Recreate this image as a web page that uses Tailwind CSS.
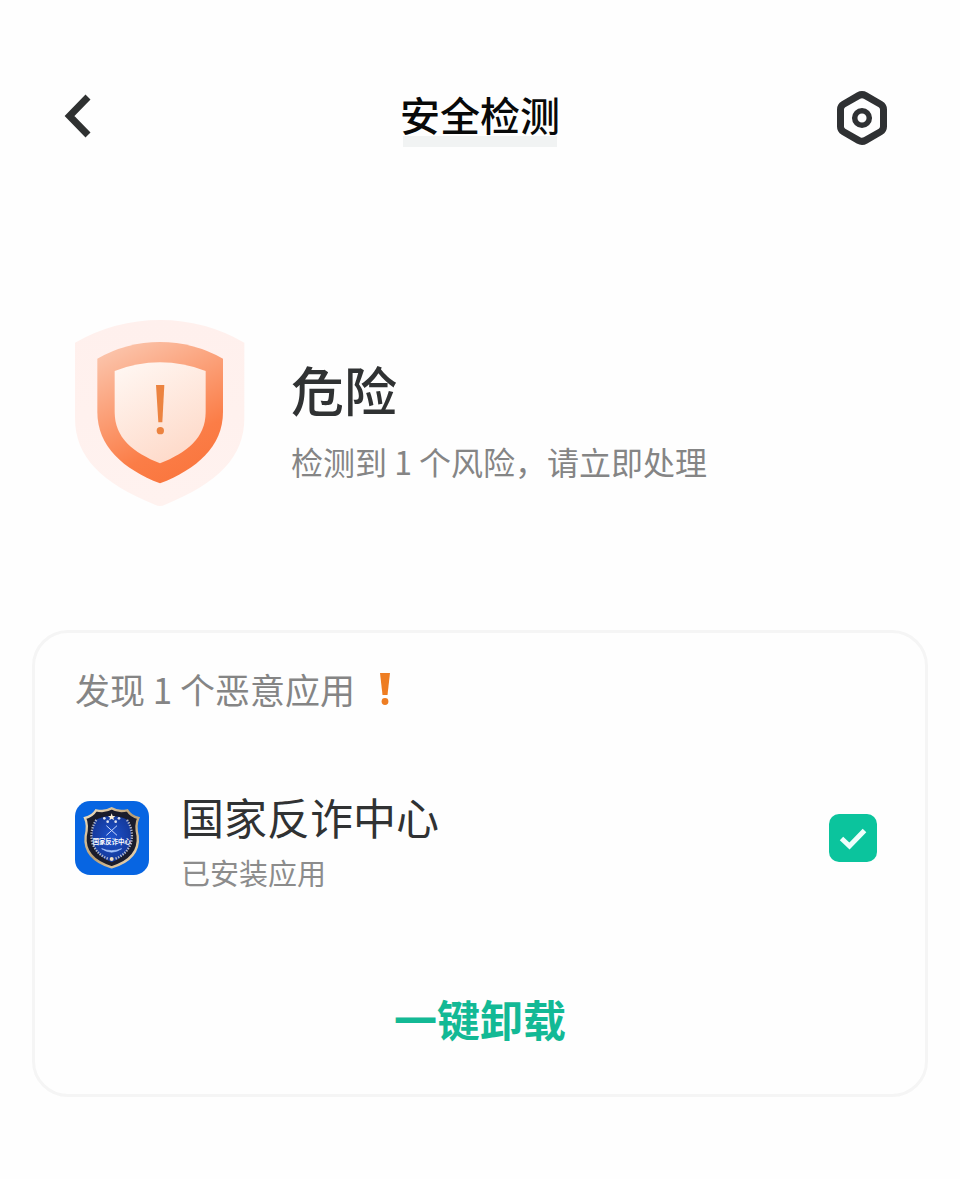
<!DOCTYPE html>
<html lang="zh-CN">
<head>
    <meta charset="UTF-8">
    <meta name="viewport" content="width=device-width, initial-scale=1.0">
    <title>安全检测</title>
    <script src="https://cdn.jsdelivr.net/npm/@tailwindcss/browser@4"></script>
</head>
<body class="bg-[#fefefe]">
<div class="min-h-screen w-full pb-20 text-[#303233] font-['Noto_Sans_CJK_SC',sans-serif]">
    <!-- Header -->
    <header class="grid grid-cols-[1fr_auto_1fr] items-center px-16 pt-[88px]">
        <button type="button" aria-label="返回" class="justify-self-start pb-1">
            <svg class="block w-7 h-11" viewBox="0 0 28 44" fill="none" stroke="#2f3131" stroke-width="7">
                <path d="M24 3L5.500 22L24 41" />
            </svg>
        </button>
        <div>
            <h1 class="text-[40px] leading-[52px] font-medium text-[#080909]">安全检测</h1>
            <div class="-mt-1 h-[11px] mx-[3px] bg-[#f1f3f3]"></div>
        </div>
        <button type="button" aria-label="设置" class="justify-self-end mr-2">
            <svg class="block w-[52px] h-[54px]" viewBox="0 0 52 54" fill="none" stroke="#2f3133">
                <path d="M22.500 4.600Q26 2.600 29.500 4.600L44.500 13.300Q47.500 15 47.500 18.500V35.500Q47.500 39 44.500 40.700L29.500 49.400Q26 51.400 22.500 49.400L7.500 40.700Q4.500 39 4.500 35.500V18.500Q4.500 15 7.500 13.300Z" stroke-width="7" />
                <circle cx="26" cy="27" r="7.300" stroke-width="5.500" />
            </svg>
        </button>
    </header>

    <!-- Status -->
    <section class="flex items-center gap-[46px] px-[75px] pt-[173px]">
        <svg class="shrink-0 w-[170px] h-[188px]" viewBox="30 30 510 564">
            <defs>
                <linearGradient id="outer" x1="0" y1="0" x2="0" y2="1">
                    <stop offset="0" stop-color="#fff0ed" />
                    <stop offset="1" stop-color="#fff2ef" />
                </linearGradient>
                <linearGradient id="ring" x1="0.2" y1="0" x2="0.65" y2="1">
                    <stop offset="0" stop-color="#fbc4ab" />
                    <stop offset="0.75" stop-color="#fb7d47" />
                    <stop offset="1" stop-color="#fa763e" />
                </linearGradient>
                <linearGradient id="inner" x1="0.2" y1="0" x2="0.7" y2="1">
                    <stop offset="0" stop-color="#fff6f1" />
                    <stop offset="1" stop-color="#fed9c8" />
                </linearGradient>
            </defs>
            <path fill="url(#outer)" d="M30 98Q150 30 285 30Q420 30 538 98V325C538 440 460 520 300 584Q285 592 270 584C110 520 30 440 30 325Z" />
            <path fill="url(#ring)" d="M97 146Q185 96 285 96Q385 96 474 146V305C474 410 395 477 285 520C175 477 97 410 97 305Z" />
            <path fill="url(#inner)" d="M149 183Q215 157 285 157Q355 157 422 183V305C422 385 365 427 285 460C205 427 149 385 149 305Z" />
            <path fill="#ec8340" d="M273 225H298L292 337H280Z" />
            <circle cx="286" cy="362" r="11" fill="#ec8340" />
        </svg>
        <div class="pt-3.5">
            <h2 class="text-[53px] leading-16 font-medium">危险</h2>
            <p class="mt-4 text-[32px] leading-12 text-[#858585]">检测到 1 个风险，请立即处理</p>
        </div>
    </section>

    <!-- Malicious apps -->
    <section class="mx-8 mt-[122px] px-10 pt-8 pb-11 border-3 border-[#f5f5f5] rounded-[36px]">
        <div class="flex items-center gap-6">
            <h3 class="text-[35px] leading-12 text-[#858585]">发现 1 个恶意应用</h3>
            <svg class="w-3 h-8" viewBox="0 0 12 32" fill="#ee7d22">
                <path d="M1 0H11L8.500 22H3.500Z" />
                <circle cx="6" cy="28.500" r="3.400" />
            </svg>
        </div>

        <div class="flex items-center mt-[63px]">
            <svg class="shrink-0 w-[74px] h-[74px]" viewBox="0 0 222 222">
                <defs>
                    <linearGradient id="gold" x1="0" y1="0" x2="1" y2="1">
                        <stop offset="0" stop-color="#f4e3c4" />
                        <stop offset="0.5" stop-color="#b99d72" />
                        <stop offset="1" stop-color="#f3dfbd" />
                    </linearGradient>
                    <radialGradient id="navy" cx="0.5" cy="0.45" r="0.65">
                        <stop offset="0" stop-color="#1d52cc" />
                        <stop offset="1" stop-color="#12338f" />
                    </radialGradient>
                </defs>
                <rect width="222" height="222" rx="46" fill="#0765e2" />
                <path d="M110 22Q128 34 157 28Q168 46 190 51Q180 72 188 105Q195 173 110 199Q25 173 32 105Q40 72 30 51Q52 46 63 28Q92 34 110 22Z" fill="#1a1c2c" stroke="url(#gold)" stroke-width="7" />
                <path d="M60 58Q86 44 110 46Q134 44 160 58Q172 90 168 125Q156 165 110 184Q64 165 52 125Q48 90 60 58Z" fill="url(#navy)" />
                <path d="M64 57Q43 88 52 126Q65 161 101 174M156 57Q177 88 168 126Q155 161 119 174" fill="none" stroke="#b4b9cc" stroke-width="7" stroke-dasharray="4 4" />
                <path d="M110 37L113 45H121L115 50L117 58L110 53L103 58L105 50L99 45H107Z" fill="#fff1d7" />
                <g fill="#e1e4ee">
                    <circle cx="88" cy="52" r="4" />
                    <circle cx="132" cy="52" r="4" />
                    <circle cx="98" cy="62" r="4" />
                    <circle cx="122" cy="62" r="4" />
                </g>
                <path d="M94 74L126 103M126 74L94 103" stroke="#c9d9ff" stroke-width="3" />
                <text x="110" y="128" text-anchor="middle" font-size="19" font-weight="700" fill="#fff">国家反诈中心</text>
                <path d="M80 143Q110 155 140 143Q110 164 80 143Z" fill="#a8c7ff" stroke="#a8c7ff" stroke-width="2" />
                <circle cx="110" cy="174" r="6" fill="#f5dfbe" />
            </svg>
            <label for="app" class="ml-8 pt-3 flex-1">
                <span class="block text-[43px] leading-14">国家反诈中心</span>
                <span class="block text-[29px] leading-14 text-[#8c8c8c]">已安装应用</span>
            </label>
            <span class="relative mr-2 w-12 h-12">
                <input type="checkbox" id="app" checked class="block appearance-none w-12 h-12 rounded-[10px] bg-[#ccd5d2] checked:bg-[#0bc49d]">
                <svg class="absolute inset-0 w-12 h-12 pointer-events-none" viewBox="0 0 48 48" fill="none" stroke="#f0fffc" stroke-width="5">
                    <path d="M12.500 24.500L20.500 32L35.500 16.500" />
                </svg>
            </span>
        </div>

        <button type="button" class="block mx-auto mt-[86px] text-[43px] leading-16 font-bold text-[#13b995]">一键卸载</button>
    </section>
</div>
</body>
</html>
